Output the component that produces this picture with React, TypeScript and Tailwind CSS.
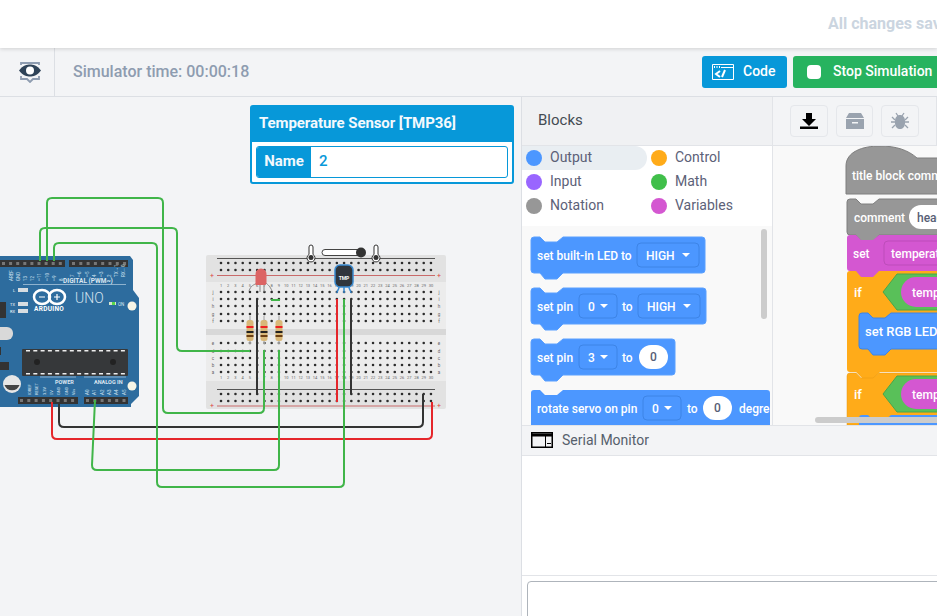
const range = (n: number) => Array.from({ length: n }, (_, i) => i);

// stacking block outline with the notch on top and the bump below
const blockPath = (x: number, y: number, w: number, h: number) =>
  `M${x} ${y + 3}Q${x} ${y} ${x + 3} ${y}H${x + 9}L${x + 14} ${y + 5}H${x + 26}L${x + 32} ${y}H${x + w - 3}Q${x + w} ${y} ${x + w} ${y + 3}V${y + h - 3}Q${x + w} ${y + h} ${x + w - 3} ${y + h}H${x + 32}L${x + 26} ${y + h + 6}H${x + 14}L${x + 9} ${y + h}H${x + 3}Q${x} ${y + h} ${x} ${y + h - 3}Z`;

function Label({ x, y, children, fill = "#fff" }: { x: number; y: number; children: string; fill?: string }) {
  return (
    <text x={x} y={y} fill={fill} fontSize="12" fontWeight="500" fontFamily="Roboto, sans-serif">
      {children}
    </text>
  );
}

function Dropdown({ x, y, w, text }: { x: number; y: number; w: number; text: string }) {
  return (
    <g>
      <rect x={x} y={y} width={w} height={24} rx="4" fill="#4c97ff" stroke="#3d84e6" />
      <Label x={x + 9} y={y + 17}>{text}</Label>
      <path d={`M${x + w - 17} ${y + 10}h8l-4 4z`} fill="#fff" />
    </g>
  );
}

function NumberPill({ x, y }: { x: number; y: number }) {
  return (
    <g>
      <rect x={x} y={y} width={29} height={24} rx="12" fill="#fff" />
      <Label x={x + 11} y={y + 16} fill="#575e75">0</Label>
    </g>
  );
}

function Palette() {
  return (
    <svg className="h-full w-full" viewBox="522 226 250 199">
      <path d={blockPath(531, 237, 174, 36)} fill="#4c97ff" stroke="#5ba0ff" />
      <Label x={537} y={260}>set built-in LED to</Label>
      <Dropdown x={637} y={243} w={62} text="HIGH" />

      <path d={blockPath(531, 288, 175, 36)} fill="#4c97ff" stroke="#5ba0ff" />
      <Label x={537} y={311}>set pin</Label>
      <Dropdown x={579} y={294} w={38} text="0" />
      <Label x={622} y={311}>to</Label>
      <Dropdown x={638} y={294} w={62} text="HIGH" />

      <path d={blockPath(531, 339, 144, 36)} fill="#4c97ff" stroke="#5ba0ff" />
      <Label x={537} y={362}>set pin</Label>
      <Dropdown x={579} y={345} w={38} text="3" />
      <Label x={622} y={362}>to</Label>
      <NumberPill x={639} y={345} />

      <path d={blockPath(531, 390, 239, 60)} fill="#4c97ff" />
      <Label x={537} y={413}>rotate servo on pin</Label>
      <Dropdown x={643} y={396} w={38} text="0" />
      <Label x={687} y={413}>to</Label>
      <NumberPill x={703} y={396} />
      <Label x={739} y={413}>degrees</Label>
      <rect x="770" y="226" width="2" height="199" fill="#f9f9f9" />

      <rect x="761" y="229" width="6" height="90" rx="3" fill="#cccccc" />
    </svg>
  );
}

function Workspace() {
  return (
    <svg className="h-full w-full" viewBox="773 146 164 279">
      {/* hat block */}
      <path d="M846 194V166C846 152 862 146 880 146C896 146 908 150 917 158H960V194Z" fill="#979797" stroke="#7f7f7f" strokeLinejoin="round" />
      <Label x={852} y={180}>title block comment</Label>

      {/* comment */}
      <path d={blockPath(847, 199, 130, 36)} fill="#979797" stroke="#7f7f7f" />
      <Label x={854} y={222}>comment</Label>
      <rect x="909" y="205" width="70" height="24" rx="12" fill="#fff" />
      <Label x={917} y={222} fill="#575e75">heading</Label>

      {/* if blocks first so the set block's bump lies on top */}
      <path d="M850 271H960V372H880L874 378H862L856 372H850Q847 372 847 369V274Q847 271 850 271Z" fill="#ffab19" />
      <path d="M850 373H856L861 378H873L879 373H960V425H847V376Q847 373 850 373Z" fill="#ffab19" stroke="#e59a16" strokeWidth="0.5" />

      <path d={blockPath(847, 235, 130, 36)} fill="#d457d1" />
      <Label x={853} y={258}>set</Label>
      <rect x="884" y="241" width="90" height="24" rx="4" fill="#d457d1" stroke="#bd4dba" />
      <Label x={891} y={258}>temperature</Label>

      {/* first condition */}
      <path d="M883 292L897 274H960V310H897Z" fill="#59c059" stroke="#4aa64a" />
      <rect x="901" y="277" width="90" height="30" rx="15" fill="#d457d1" />
      <Label x={912} y={297}>temperature</Label>
      <text x="854" y="297" fill="#fff" fontSize="13" fontWeight="500" fontFamily="Roboto, sans-serif">if</text>

      <path d={blockPath(859, 313, 130, 36)} fill="#4c97ff" stroke="#3d84e6" />
      <text x="865" y="336" fill="#fff" fontSize="13" fontWeight="500" fontFamily="Roboto, sans-serif">set RGB LED</text>

      {/* second condition */}
      <path d="M883 394L897 376H960V412H897Z" fill="#59c059" stroke="#4aa64a" />
      <rect x="901" y="379" width="90" height="30" rx="15" fill="#d457d1" />
      <Label x={912} y={399}>temperature</Label>
      <text x="854" y="399" fill="#fff" fontSize="13" fontWeight="500" fontFamily="Roboto, sans-serif">if</text>
      <path d={blockPath(859, 415, 130, 36)} fill="#4c97ff" />
      <rect x="815" y="417" width="130" height="6" rx="3" fill="#cccccc" />
    </svg>
  );
}

function Board() {
  return (
    <g>
      <path d="M-6 256H130L133 260V290L139 298V396L131 404V407H-6Z" fill="#2d6c9e" />
      {/* pin headers */}
      <rect x="-4" y="260" width="69" height="7" fill="#333" />
      <rect x="69" y="260" width="59" height="7" fill="#333" />
      <rect x="18" y="397" width="60" height="7" fill="#333" />
      <rect x="84" y="397" width="44" height="7" fill="#333" />
      {range(9).map((i) => (
        <rect key={i} x={2 + i * 7.1} y="262" width="3" height="3" fill="#777" />
      ))}
      {range(8).map((i) => (
        <rect key={i} x={72 + i * 7.3} y="262" width="3" height="3" fill="#777" />
      ))}
      {range(8).map((i) => (
        <rect key={i} x={20 + i * 7.3} y="399" width="3" height="3" fill="#777" />
      ))}
      {range(6).map((i) => (
        <rect key={i} x={86 + i * 7.3} y="399" width="3" height="3" fill="#777" />
      ))}
      {/* pin labels */}
      {["AREF", "GND", "13", "12", "~11", "~10", "~9", "8"].map((t, i) => (
        <text key={t} transform={`translate(${13 + i * 7.1} 281) rotate(-90)`} fontSize="4.5" fill="#cfe0ee" fontFamily="Roboto, sans-serif">{t}</text>
      ))}
      {["7", "~6", "~5", "4", "~3", "2", "TX→1", "RX←0"].map((t, i) => (
        <text key={t} transform={`translate(${74 + i * 7.3} 277) rotate(-90)`} fontSize="4.5" fill="#cfe0ee" fontFamily="Roboto, sans-serif">{t}</text>
      ))}
      <text x="63" y="283" fontSize="6.5" fill="#dbe7f1" fontWeight="700" fontFamily="Roboto, sans-serif">DIGITAL (PWM~)</text>
      <path d="M23 284.5H126" stroke="#a7c4da" strokeWidth="0.8" />
      {/* logo */}
      <g fill="none" stroke="#fff" strokeWidth="2.5">
        <ellipse cx="42" cy="297" rx="8" ry="7" />
        <ellipse cx="57" cy="297" rx="8" ry="7" />
      </g>
      <path d="M39 297h6M54 297h6M57 294v6" stroke="#fff" strokeWidth="1.2" />
      <text x="34" y="311" fontSize="6.5" fill="#fff" fontWeight="700" letterSpacing="0.3" fontFamily="Roboto, sans-serif">ARDUINO</text>
      <text x="75" y="303" fontSize="14" fill="#d5e3ef" fontWeight="300" fontFamily="Roboto, sans-serif">UNO</text>
      <rect x="109" y="302" width="7" height="3" fill="#d4e5d0" />
      <rect x="112" y="302" width="3" height="3" fill="#57d94a" />
      <text x="118" y="306" fontSize="4.5" fill="#dbe7f1" fontFamily="Roboto, sans-serif">ON</text>
      <circle cx="132" cy="306" r="4.5" fill="#f7f5e6" />
      <circle cx="132" cy="386" r="4.5" fill="#f7f5e6" />
      {/* leds */}
      <rect x="18" y="288" width="10" height="4" fill="#d7dde1" />
      <rect x="18" y="302" width="10" height="4" fill="#d7dde1" />
      <rect x="18" y="309" width="10" height="4" fill="#d7dde1" />
      <text x="13" y="292" fontSize="4" fill="#fff">L</text>
      <text x="10" y="306" fontSize="4" fill="#fff">TX</text>
      <text x="10" y="313" fontSize="4" fill="#fff">RX</text>
      {/* parts */}
      <rect x="-6" y="302" width="12" height="16" fill="#333" />
      <rect x="-10" y="327" width="23" height="13" rx="6" fill="#d9d9d9" />
      <rect x="-4" y="347" width="5" height="8" fill="#333" />
      <rect x="-3" y="362" width="12" height="8" fill="#333" />
      {/* chip */}
      <rect x="22" y="349" width="106" height="27" rx="1" fill="#36383a" />
      {range(14).map((i) => (
        <g key={i}>
          <rect x={26 + i * 7.3} y="350" width="4" height="1.5" fill="#eee" />
          <rect x={26 + i * 7.3} y="373" width="4" height="1.5" fill="#eee" />
        </g>
      ))}
      <circle cx="37" cy="362" r="3" fill="#222" />
      <circle cx="113" cy="362" r="3" fill="#222" />
      {/* capacitor */}
      <circle cx="12" cy="384" r="9" fill="#e6e6e6" />
      <path d="M4.5 385a8 8 0 0 0 15 0z" fill="#444" />
      <path d="M40 377H76M84 377H126" stroke="#a7c4da" strokeWidth="0.8" />
      <text x="55" y="384" fontSize="5.5" fill="#dbe7f1" fontWeight="700" fontFamily="Roboto, sans-serif">POWER</text>
      <text x="94" y="384" fontSize="5.5" fill="#dbe7f1" fontWeight="700" fontFamily="Roboto, sans-serif">ANALOG IN</text>
      {["IOREF", "RESET", "3.3V", "5V", "GND", "GND", "Vin"].map((t, i) => (
        <text key={i} transform={`translate(${31 + i * 7.3} 395) rotate(-90)`} fontSize="4" fill="#cfe0ee" fontFamily="Roboto, sans-serif">{t}</text>
      ))}
      {["A0", "A1", "A2", "A3", "A4", "A5"].map((t, i) => (
        <text key={t} transform={`translate(${89 + i * 7.3} 395) rotate(-90)`} fontSize="4.5" fill="#cfe0ee" fontFamily="Roboto, sans-serif">{t}</text>
      ))}
    </g>
  );
}

function Breadboard() {
  const cols = range(30).map((i) => 221 + i * 7.24);
  return (
    <g>
      <rect x="206" y="255" width="240" height="154" rx="2" fill="#e2e2e2" />
      <rect x="206" y="282" width="240" height="47" fill="#ececec" />
      <rect x="206" y="335" width="240" height="46" fill="#ececec" />
      <rect x="206" y="329" width="240" height="6" fill="#d8d8d8" />
      <path d="M217 258.5H435M217 389.5H435" stroke="#555" />
      <path d="M217 275.5H435M217 406H435" stroke="#c96a6a" />
      <text x="210" y="278" fontSize="7" fill="#d44">+</text>
      <text x="437" y="278" fontSize="7" fill="#d44">+</text>
      <text x="210" y="408" fontSize="7" fill="#d44">+</text>
      <text x="437" y="408" fontSize="7" fill="#d44">+</text>
      {[263, 270, 394, 401].map((y) =>
        cols.map((x) => <circle key={`${x}-${y}`} cx={x} cy={y} r="1.3" fill="#2c2c2c" />)
      )}
      {[292, 299, 306, 314, 321, 343, 351, 358, 365, 372].map((y) =>
        cols.map((x) => <circle key={`${x}-${y}`} cx={x} cy={y} r="1.3" fill="#2c2c2c" />)
      )}
      {cols.map((x, i) => (
        <g key={x}>
          <text x={x} y="287" fontSize="4" fill="#666" textAnchor="middle">{i + 1}</text>
          <text x={x} y="379" fontSize="4" fill="#666" textAnchor="middle">{i + 1}</text>
        </g>
      ))}
      {/* row letters */}
      {["j", "i", "h", "g", "f", "e", "d", "c", "b", "a"].map((t, i) => {
        const y = [292, 299, 306, 314, 321, 343, 351, 358, 365, 372][i] + 1.5;
        return (
          <g key={t}>
            <text x="213" y={y} fontSize="4.5" fill="#666" textAnchor="middle">{t}</text>
            <text x="439" y={y} fontSize="4.5" fill="#666" textAnchor="middle">{t}</text>
          </g>
        );
      })}
      {/* temperature slider */}
      <path d="M311 245a2 2 0 0 1 2 2v7.5a4 4 0 1 1-4 0V247a2 2 0 0 1 2-2z" fill="#fff" stroke="#333" />
      <path d="M376 245a2 2 0 0 1 2 2v7.5a4 4 0 1 1-4 0V247a2 2 0 0 1 2-2z" fill="#fff" stroke="#333" />
      <circle cx="311" cy="257.5" r="2.5" fill="#333" />
      <circle cx="376" cy="257.5" r="2.5" fill="#333" />
      <rect x="322" y="249.500" width="38" height="6" rx="3" fill="#fff" stroke="#444" />
      <circle cx="361" cy="252.500" r="5" fill="#333" />
    </g>
  );
}

function Circuit() {
  return (
    <svg className="absolute inset-0 h-full w-[521px]" viewBox="0 97 521 519">
      <Board />
      <Breadboard />
      {/* led */}
      <path d="M257 283C254 285 251 285 249 291M260 284V292M264 284V292M266 283C268 285 270 286 272 291" fill="none" stroke="#888" />
      <path d="M255.500 285V274a5.500 5.500 0 0 1 11 0V283l-1 2Z" fill="#dc6464" />
      {/* tmp36 */}
      <path d="M339 287C339 290 337 290 337 293M344 287V293M349 287C349 290 351 290 351 293" stroke="#3a8ad0" strokeWidth="1.500" fill="none" />
      <rect x="335" y="265" width="18" height="22" rx="5" fill="#30363c" stroke="#3a8ad0" strokeWidth="1.500" />
      <text x="344" y="280" fontSize="5" fill="#fff" fontWeight="700" textAnchor="middle" fontFamily="Roboto, sans-serif">TMP</text>
      {/* breadboard jumpers */}
      <path d="M257 299V394M351 299V394" stroke="#333" strokeWidth="2" fill="none" />
      <path d="M337 299V402" stroke="#e5262b" strokeWidth="2" fill="none" />
      <path d="M271 300H280" stroke="#40b549" strokeWidth="2" fill="none" />
      {/* outer wires */}
      <g fill="none" strokeWidth="2" strokeLinejoin="round">
        <path d="M52 402V434Q52 439 57 439H427Q432 439 432 434V402" stroke="#e5262b" />
        <path d="M59 402V422Q59 427 64 427H418Q423 427 423 422V394" stroke="#333" />
        <path d="M47 261V203Q47 198 52 198H158Q163 198 163 203V408Q163 413 168 413H259Q264 413 264 408V350" stroke="#40b549" />
        <path d="M40 261V233Q40 228 45 228H172Q177 228 177 233V346Q177 351 182 351H250" stroke="#40b549" />
        <path d="M54 261V248Q54 243 59 243H152Q157 243 157 248V482Q157 487 162 487H339Q344 487 344 482V299" stroke="#40b549" />
        <path d="M95 400L92 465Q92 470 97 470H274Q279 470 279 465V350" stroke="#40b549" />
      </g>
      {/* resistors */}
      {[250, 264, 279].map((x) => (
        <g key={x}>
          <path d={`M${x} 316V344`} stroke="#b9b9b9" strokeWidth="1.500" />
          <rect x={x - 3.5} y="320" width="7" height="21" rx="2.500" fill="#d9b879" />
          <rect x={x - 3.5} y="326" width="7" height="2" fill="#e22" />
          <rect x={x - 3.5} y="331" width="7" height="2" fill="#222" />
          <rect x={x - 3.5} y="335" width="7" height="2" fill="#6b3f14" />
        </g>
      ))}
    </svg>
  );
}

function Category({ color, name, active }: { color: string; name: string; active?: boolean }) {
  return (
    <div className={active ? "flex h-6 items-center rounded-r-full bg-[#e9eef2] pl-[4px]" : "flex h-6 items-center pl-[4px]"}>
      <span className="h-4 w-4 rounded-full" style={{ backgroundColor: color }} />
      <span className="ml-2 pb-[2px] text-sm text-[#5c6178]">{name}</span>
    </div>
  );
}

function ToolButton({ children }: { children: React.ReactNode }) {
  return (
    <div className="flex h-8 w-[38px] items-center justify-center rounded border border-[#e5e7eb] bg-[#f3f4f6]">
      {children}
    </div>
  );
}

export default function App() {
  return (
    <div className="flex h-[616px] w-[937px] flex-col overflow-hidden bg-[#f3f4f6] font-['Roboto',sans-serif]">
      {/* Top bar */}
      <div className="relative z-10 flex h-12 shrink-0 items-center bg-white pl-[828px] shadow-[0_1px_4px_rgba(0,0,0,0.15)]">
        <span className="whitespace-nowrap text-base font-bold text-[#cbd5e0]">All changes saved</span>
      </div>

      {/* Simulator toolbar */}
      <div className="flex h-[49px] shrink-0 items-center border-b border-[#dcdfe4]">
        <div className="flex h-full w-[55px] shrink-0 items-center justify-center border-r border-[#dcdfe4] pl-[5px]">
          <svg width="24" height="22" viewBox="0 0 24 22">
            <path d="M3 4V2h18v2M3 15v3h6l3 3 3-3h6v-3" fill="none" stroke="#8e9cb0" strokeWidth="1.800" />
            <path d="M1 9.500C5 4 9 3.500 12 3.500S19 4 23 9.500C19 15 15 15.500 12 15.500S5 15 1 9.500Z" fill="#2f4358" />
            <circle cx="12" cy="9.500" r="4" fill="#fff" />
          </svg>
        </div>
        <div className="w-[647px] shrink-0 whitespace-nowrap pl-[18px] text-base font-medium text-[#8e9cb0]">
          Simulator time: 00:00:18
        </div>
        <div className="flex h-8 w-[85px] shrink-0 items-center rounded-[3px] bg-[#0798d9] pl-[10px] text-sm font-medium text-white">
          <svg width="22" height="16" viewBox="0 0 22 16" fill="none" stroke="#fff">
            <path d="M.5.5h21v15H.5z" />
            <path d="M8 7l-4 3 4 3M13 6l-3 7" strokeWidth="2" />
            <path d="M9 3.500H21" strokeWidth="1" />
            <path d="M2 3h1M4.500 3h1M7 3h1" strokeWidth="2" />
          </svg>
          <span className="ml-[9px] pb-[2px]">Code</span>
        </div>
        <div className="ml-[6px] flex h-8 w-[150px] shrink-0 items-center rounded-[3px] bg-[#27b35f] pl-[14px] text-sm font-medium text-white">
          <span className="h-[14px] w-[14px] rounded-sm bg-white" />
          <span className="ml-[12px] whitespace-nowrap pb-[2px]">Stop Simulation</span>
        </div>
      </div>

      <div className="flex min-h-0 flex-1">
        {/* Canvas */}
        <div className="relative w-[522px] shrink-0 border-r border-[#dcdfe4]">
          <Circuit />
          <div className="absolute left-[250px] top-[8px] w-[264px] rounded-[3px] border-2 border-[#0798d9] bg-white">
            <div className="flex h-[35px] items-center bg-[#0798d9] pb-[2px] pl-[7px] text-[15px] font-bold tracking-[-0.08px] text-[#f3f9fd]">
              Temperature Sensor [TMP36]
            </div>
            <div className="m-1 flex h-8 overflow-hidden rounded-[3px] border border-[#0798d9]">
              <div className="flex w-[54px] items-center justify-center bg-[#0798d9] pb-[2px] text-[15px] font-bold text-[#f3f9fd]">Name</div>
              <div className="flex flex-1 items-center pb-[2px] pl-2 text-[15px] font-medium text-[#0798d9]">2</div>
            </div>
          </div>
        </div>

        {/* Code panel */}
        <div className="flex min-w-0 flex-1 flex-col bg-white">
          <div className="flex h-[328px] shrink-0">
            <div className="flex w-[251px] shrink-0 flex-col border-r border-[#e2e4e8]">
              <div className="flex h-[49px] shrink-0 items-center border-b border-[#e2e4e8] bg-[#f0f1f3] pb-[2px] pl-4 text-[15px] text-[#444b52]">
                Blocks
              </div>
              <div className="grid h-[80px] shrink-0 grid-cols-[125px_1fr] content-start bg-white">
                <Category color="#4c97ff" name="Output" active />
                <Category color="#ffab19" name="Control" />
                <Category color="#9966ff" name="Input" />
                <Category color="#40bf4a" name="Math" />
                <Category color="#979797" name="Notation" />
                <Category color="#d457d1" name="Variables" />
              </div>
              <div className="min-h-0 flex-1 bg-[#f9f9f9]">
                <Palette />
              </div>
            </div>
            <div className="flex min-w-0 flex-1 flex-col">
              <div className="flex h-[49px] shrink-0 items-center gap-2 border-b border-[#e2e4e8] bg-[#f3f4f6] pl-[17px]">
                <ToolButton>
                  <svg width="18" height="16" viewBox="0 0 18 16">
                    <path d="M6 0h6v6h4l-7 7-7-7h4zM0 13.500h18V16H0z" fill="#000" />
                  </svg>
                </ToolButton>
                <ToolButton>
                  <svg width="18" height="16" viewBox="0 0 18 16">
                    <path d="M3 0h12l3 5H0zM0 6h18v10H0zM6 9v1.500h6V9z" fill="#9aa3af" fillRule="evenodd" />
                  </svg>
                </ToolButton>
                <ToolButton>
                  <svg width="18" height="18" viewBox="0 0 18 18" fill="none" stroke="#9aa3af" strokeWidth="1.300">
                    <path d="M5 1l2 3M13 1l-2 3M1 5l3 3M17 5l-3 3M0 10h4M18 10h-4M1 16l3-3M17 16l-3-3" />
                    <path d="M9 3c-3 0-5 2.500-5 6v2c0 4 2.500 6 5 6s5-2 5-6V9c0-3.500-2-6-5-6z" fill="#9aa3af" stroke="none" />
                  </svg>
                </ToolButton>
                <div className="ml-[9px] h-full border-l border-[#e2e4e8]" />
              </div>
              <div className="min-h-0 flex-1 bg-[#f9f9f9]">
                <Workspace />
              </div>
            </div>
          </div>

          {/* Serial monitor */}
          <div className="flex h-[31px] shrink-0 items-center border-y border-[#e2e4e8] bg-[#f3f4f6] pb-[2px] pl-[9px] text-sm text-[#56606c]">
            <svg width="22" height="16" viewBox="0 0 22 16" fill="none" stroke="#000">
              <path d="M.75.75h20.500v14.500H.75z" strokeWidth="1.500" />
              <path d="M0 3h22" strokeWidth="3" />
              <path d="M14.500 4v11M16 11.500h4" />
            </svg>
            <span className="ml-[9px]">Serial Monitor</span>
          </div>
          <div className="h-[120px] shrink-0 border-b border-[#e2e4e8] bg-white" />
          <div className="flex-1 bg-white pl-[5px] pt-[5px]">
            <div className="h-20 w-[420px] rounded-sm border border-[#aeb4bb] bg-white" />
          </div>
        </div>
      </div>
    </div>
  );
}
